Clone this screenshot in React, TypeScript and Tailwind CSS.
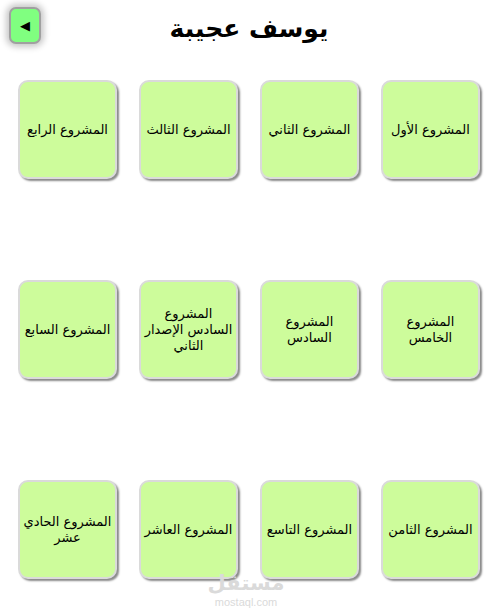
const projects = [
    'المشروع الأول',
    'المشروع الثاني',
    'المشروع الثالث',
    'المشروع الرابع',
    'المشروع الخامس',
    'المشروع السادس',
    'المشروع السادس الإصدار الثاني',
    'المشروع السابع',
    'المشروع الثامن',
    'المشروع التاسع',
    'المشروع العاشر',
    'المشروع الحادي عشر',
]

const App = () => {
    return (
      <div
        className="relative w-[498px] h-[615px] bg-white overflow-hidden"
        style={{ fontFamily: '"DejaVu Sans", "Noto Sans", sans-serif' }}
      >
          <header className="relative h-[60px] flex items-center justify-center">
              <button className="absolute left-[9px] top-[7px] w-[32px] h-[37px] rounded-[7px] bg-[#80ff80] border-2 border-[#a0a0a0] shadow-[0_0_6px_3px_rgba(0,0,0,0.22)] flex items-center justify-center text-black text-[13px] leading-none">
                  ◀
              </button>
              <h1 className="text-[25px] font-bold text-black leading-none mt-[-4px]" dir="rtl">
                  يوسف عجيبة
              </h1>
          </header>

          <main dir="rtl" className="grid grid-cols-4 gap-x-[22px] gap-y-[101px] px-[18px] pt-[20px]">
              {projects.map((p) => (
                <div
                  key={p}
                  className="w-[99px] h-[99px] rounded-[10px] bg-[#cdfc9b] border-2 border-[#dadada] shadow-[2px_2px_2px_#8a8a8a] flex items-center justify-center text-center text-[13px] leading-[16px] text-black"
                >
                    {p}
                </div>
              ))}
          </main>

          {/* watermark */}
          <div className="absolute left-[206px] top-[573px] w-[80px] flex flex-col items-center text-[#dadada] pointer-events-none">
              <span className="text-[21px] font-bold leading-none">مستقل</span>
              <span className="text-[11px] leading-none mt-[3px]" style={{ fontFamily: '"Liberation Sans", sans-serif' }}>
                  mostaql.com
              </span>
          </div>
      </div>
    )
}

export default App
